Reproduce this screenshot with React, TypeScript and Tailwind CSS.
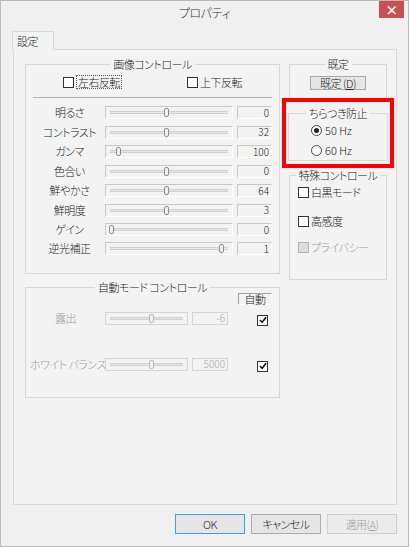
import React from "react";

type SliderRow = { label: string; value: string; pos: number; h: string };

const imageRows: SliderRow[] = [
    { label: "明るさ", value: "0", pos: 0.5, h: "h-[19px]" },
    { label: "コントラスト", value: "32", pos: 0.5, h: "h-[20px]" },
    { label: "ガンマ", value: "100", pos: 0.06, h: "h-[19px]" },
    { label: "色合い", value: "0", pos: 0.5, h: "h-[20px]" },
    { label: "鮮やかさ", value: "64", pos: 0.5, h: "h-[19px]" },
    { label: "鮮明度", value: "3", pos: 0.5, h: "h-[20px]" },
    { label: "ゲイン", value: "0", pos: 0, h: "h-[19px]" },
    { label: "逆光補正", value: "1", pos: 1, h: "h-[19px]" },
];

function Slider({ width, pos, disabled = false }: { width: number; pos: number; disabled?: boolean }) {
    const left = Math.round(3 + pos * (width - 18));
    return (
        <div
            className={`relative flex h-[13px] shrink-0 items-center border px-[4px] ${
                disabled ? "border-[#d6d6d6]" : "border-[#c9c9c9] border-r-white border-b-white"
            }`}
            style={{ width }}
        >
            <div className="h-[3px] w-full border-y border-[#d0d0d0] bg-[#e6e6e6]" />
            <div
                className={`absolute top-[1px] h-[9px] w-[5px] rounded-[2px] border bg-[#f2f2f2] ${
                    disabled ? "border-[#b8b8b8]" : "border-[#8f8f8f]"
                }`}
                style={{ left }}
            />
        </div>
    );
}

function ValueBox({ value, width, disabled = false }: { value: string; width: string; disabled?: boolean }) {
    return (
        <div
            className={`flex h-[13px] shrink-0 items-center justify-end border pr-[2px] text-[10px] leading-none tracking-normal ${width} ${
                disabled
                    ? "border-[#d6d6d6] text-[#a8a8a8]"
                    : "border-[#c9c9c9] border-r-white border-b-white text-[#222]"
            }`}
        >
            {value}
        </div>
    );
}

function Check({ checked = false, disabled = false }: { checked?: boolean; disabled?: boolean }) {
    return (
        <span
            className={`flex h-[11px] w-[11px] shrink-0 items-center justify-center border ${
                disabled ? "border-[#b5b5b5] bg-[#dcdcdc]" : "border-[#333] bg-white"
            }`}
        >
            {checked && (
                <svg viewBox="0 0 9 9" className="h-[8px] w-[8px]">
                    <path d="M1 4.5 L3.5 7 L8 1.5" fill="none" stroke="#111" strokeWidth="1.8" />
                </svg>
            )}
        </span>
    );
}

function Radio({ checked = false }: { checked?: boolean }) {
    return (
        <span className="flex h-[11px] w-[11px] shrink-0 items-center justify-center rounded-full border border-[#444] bg-white">
            {checked && <span className="h-[5px] w-[5px] rounded-full bg-[#222]" />}
        </span>
    );
}

function Group({ title, className = "", children }: { title: string; className?: string; children?: React.ReactNode }) {
    return (
        <fieldset className={`border border-[#d8d8d8] ${className}`}>
            <legend className="mx-auto whitespace-nowrap px-[3px] leading-[14px] text-[#222]">{title}</legend>
            {children}
        </fieldset>
    );
}

export default function App() {
    return (
        <div
            className="flex h-[547px] w-[409px] flex-col border border-[#b9b9b9] bg-[#f0f0f0] text-[11px] font-light tracking-[-0.5px] text-[#222] [font-feature-settings:'palt']"
            style={{ fontFamily: '"Noto Sans CJK JP", "Noto Sans", sans-serif' }}
        >
            {/* Title bar */}
            <div className="grid h-[23px] grid-cols-[1fr_auto_1fr]">
                <div />
                <div className="flex items-center text-[12px] text-[#333]">プロパティ</div>
                <div className="flex items-start justify-end pr-[4px]">
                    <div className="flex h-[17px] w-[25px] items-center justify-center bg-[#c75050] text-[13px] font-bold leading-none text-white">
                        ×
                    </div>
                </div>
            </div>

            {/* Tab */}
            <div className="relative z-10 ml-[11px] mt-[7px] mb-[-1px] flex h-[19px] w-[42px] items-center border-x border-t border-[#d9d9d9] bg-[#f3f3f3] pl-[4px]">
                設定
            </div>

            {/* Panel */}
            <div className="ml-[12px] flex h-[456px] w-[384px] gap-[9px] border border-[#d9d9d9] bg-[#f3f3f3] pl-[11px]">
                {/* Left column */}
                <div className="flex w-[255px] flex-col">
                    <Group title="画像コントロール" className="mt-[7px] pb-[15px]">
                        <div className="mt-[3px] flex h-[16px] items-center pl-[37px]">
                            <div className="flex w-[124px] items-center gap-[2px]">
                                <Check />
                                <span className="border border-dotted border-[#555] px-[1px] leading-[12px]">左右反転</span>
                            </div>
                            <div className="flex items-center gap-[2px]">
                                <Check />
                                <span>上下反転</span>
                            </div>
                        </div>
                        <div className="mx-[7px] mt-[7px] h-px bg-[#b4b4b4]" />
                        <div className="mt-[5px] flex flex-col">
                            {imageRows.map((r) => (
                                <div key={r.label} className={`flex items-center ${r.h}`}>
                                    <div className="w-[79px] pl-[8px] text-center">{r.label}</div>
                                    <Slider width={128} pos={r.pos} />
                                    <div className="w-[4px]" />
                                    <ValueBox value={r.value} width="w-[35px]" />
                                </div>
                            ))}
                        </div>
                    </Group>

                    <Group title="自動モード コントロール" className="mt-[6px] pb-[20px]">
                        <div className="flex justify-end pr-[7px]">
                            <div className="-mt-px flex h-[12px] w-[34px] items-center justify-center border border-[#a0a0a0] border-r-white border-b-white leading-none">
                                自動
                            </div>
                        </div>
                        <div className="flex h-[26px] items-center">
                            <div className="w-[79px] text-center text-[#a0a0a0]">露出</div>
                            <Slider width={83} pos={0.62} disabled />
                            <div className="w-[4px]" />
                            <ValueBox value="-6" width="w-[36px]" disabled />
                            <div className="ml-[29px] mt-[4px]">
                                <Check checked />
                            </div>
                        </div>
                        <div className="mt-[20px] flex h-[26px] items-center">
                            <div className="w-[79px] whitespace-nowrap pl-[4px] text-center text-[#a0a0a0]">ホワイト バランス</div>
                            <Slider width={83} pos={0.62} disabled />
                            <div className="w-[4px]" />
                            <ValueBox value="5000" width="w-[36px]" disabled />
                            <div className="ml-[29px] mt-[4px]">
                                <Check checked />
                            </div>
                        </div>
                    </Group>
                </div>

                {/* Right column */}
                <div className="flex w-[98px] flex-col">
                    <Group title="既定" className="mt-[7px] pb-[8px]">
                        <div className="mt-[5px] flex justify-center">
                            <div className="flex h-[14px] w-[56px] items-center justify-center border border-[#a8a8a8] bg-[#e6e6e6] leading-none">
                                既定&nbsp;(<span className="underline">D</span>)
                            </div>
                        </div>
                    </Group>

                    <div className="relative z-10 mx-[-7px] mt-[-1px] border-4 border-[#ff0000] bg-[#f3f3f3] px-[2px] pt-[4px] pb-[3px]">
                        <Group title="ちらつき防止">
                            <div className="flex h-[20px] items-center gap-[3px] pl-[22px] tracking-normal">
                                <Radio checked />
                                <span>50&nbsp;Hz</span>
                            </div>
                            <div className="flex h-[20px] items-center gap-[3px] pl-[22px] tracking-normal">
                                <Radio />
                                <span>60&nbsp;Hz</span>
                            </div>
                        </Group>
                    </div>

                    <Group title="特殊コントロール" className="pb-[24px]">
                        <div className="mt-[2px] flex h-[16px] items-center gap-[2px] pl-[8px]">
                            <Check />
                            <span>白黒モード</span>
                        </div>
                        <div className="mt-[13px] flex h-[16px] items-center gap-[2px] pl-[8px]">
                            <Check />
                            <span>高感度</span>
                        </div>
                        <div className="mt-[10px] flex h-[16px] items-center gap-[2px] pl-[8px] text-[#a0a0a0]">
                            <Check disabled />
                            <span>プライバシー</span>
                        </div>
                    </Group>
                </div>
            </div>

            {/* Buttons */}
            <div className="mt-[9px] flex justify-end gap-[6px] pr-[11px]">
                <div className="flex h-[20px] w-[70px] items-center justify-center border border-[#4a9be3] bg-[#e5e5e5]">OK</div>
                <div className="flex h-[20px] w-[70px] items-center justify-center border border-[#adadad] bg-[#e5e5e5]">
                    キャンセル
                </div>
                <div className="flex h-[20px] w-[70px] items-center justify-center border border-[#d0d0d0] bg-[#ebebeb] text-[#a0a0a0]">
                    適用(<span className="underline">A</span>)
                </div>
            </div>
        </div>
    );
}
